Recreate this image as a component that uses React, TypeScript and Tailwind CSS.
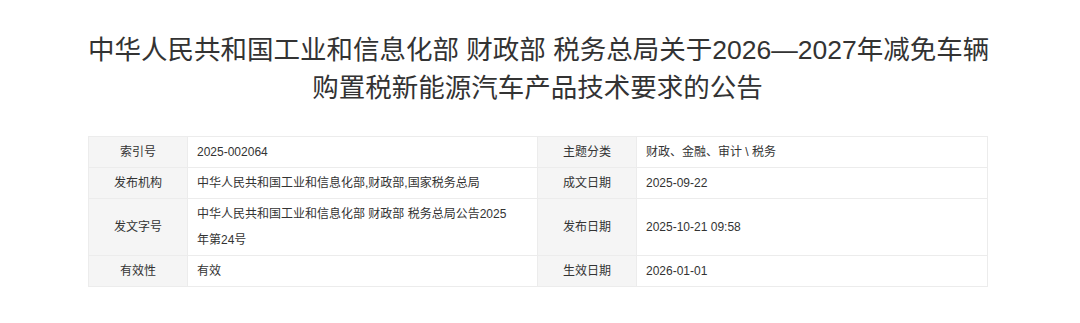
import React from "react";

const rows: { l1: string; v1: React.ReactNode; l2: string; v2: string }[] = [
  { l1: "索引号", v1: "2025-002064", l2: "主题分类", v2: "财政、金融、审计 \\ 税务" },
  { l1: "发布机构", v1: "中华人民共和国工业和信息化部,财政部,国家税务总局", l2: "成文日期", v2: "2025-09-22" },
  {
    l1: "发文字号",
    v1: "中华人民共和国工业和信息化部 财政部 税务总局公告2025年第24号",
    l2: "发布日期",
    v2: "2025-10-21 09:58",
  },
  { l1: "有效性", v1: "有效", l2: "生效日期", v2: "2026-01-01" },
];

export default function App() {
  return (
    <div
      className="w-[1080px] h-[323px] bg-white text-[#333]"
      style={{ fontFamily: '"Liberation Sans", Arial, "Noto Sans CJK SC", sans-serif' }}
    >
      <div className="ml-[88px] w-[899px] pt-[31px]">
        <h1 className="text-center text-[26.5px] leading-[38px] font-normal text-[#333]">
          <span className="block whitespace-nowrap">中华人民共和国工业和信息化部 财政部 税务总局关于2026—2027年减免车辆</span>
          <span className="block whitespace-nowrap">购置税新能源汽车产品技术要求的公告</span>
        </h1>
        <table className="mt-[29px] w-full border-collapse border border-[#e6e6e6] text-[12px] leading-[26px] table-fixed">
          <colgroup>
            <col className="w-[99px]" />
            <col className="w-[350px]" />
            <col className="w-[99px]" />
            <col className="w-[351px]" />
          </colgroup>
          <tbody>
            {rows.map((r) => (
              <tr key={r.l1}>
                <td className="border border-[#ececec] bg-[#f5f5f5] text-center py-[2px] text-[#333]">{r.l1}</td>
                <td className="border border-[#ececec] py-[2px] pl-[9px] pr-[20px] text-[#333]">{r.v1}</td>
                <td className="border border-[#ececec] bg-[#f5f5f5] text-center py-[2px] text-[#333]">{r.l2}</td>
                <td className="border border-[#ececec] py-[2px] pl-[9px] pr-[10px] text-[#333]">{r.v2}</td>
              </tr>
            ))}
          </tbody>
        </table>
      </div>
    </div>
  );
}
